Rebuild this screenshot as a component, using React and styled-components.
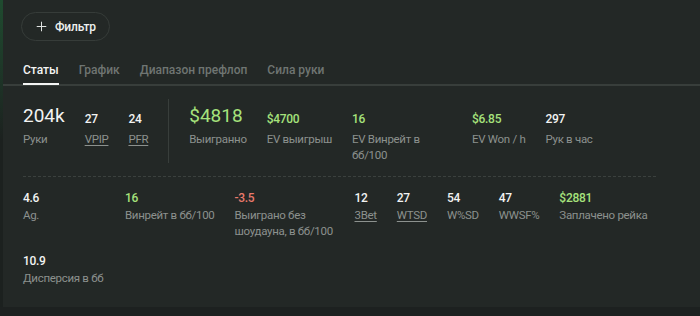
import React from 'react';
import styled, { createGlobalStyle } from 'styled-components';
import { Plus } from 'lucide-react';

const GlobalStyle = createGlobalStyle`
  html, body {
    margin: 0;
    padding: 0;
    background: #1d2120;
  }
  body {
    font-family: Roboto, "Liberation Sans", Arial, sans-serif;
    color: #eef0ef;
  }
`;

const topStats = [
  { value: '204k', label: 'Руки', big: true },
  { value: '27', label: 'VPIP', link: true },
  { value: '24', label: 'PFR', link: true },
  'divider',
  { value: '$4818', label: 'Выигранно', big: true, tone: 'green' },
  { value: '$4700', label: 'EV выигрыш', tone: 'green' },
  { value: '16', label: 'EV Винрейт в бб/100', tone: 'green' },
  { value: '$6.85', label: 'EV Won / h', tone: 'green' },
  { value: '297', label: 'Рук в час' },
];

const moreStats = [
  { value: '4.6', label: 'Ag.', minWidth: 82 },
  { value: '16', label: 'Винрейт в бб/100', tone: 'green' },
  { value: '-3.5', label: 'Выиграно без шоудауна, в бб/100', tone: 'red' },
  { value: '12', label: '3Bet', link: true },
  { value: '27', label: 'WTSD', link: true },
  { value: '54', label: 'W%SD' },
  { value: '47', label: 'WWSF%' },
  { value: '$2881', label: 'Заплачено рейка', tone: 'green' },
  { value: '10.9', label: 'Дисперсия в бб' },
];

const tabs = ['Статы', 'График', 'Диапазон префлоп', 'Сила руки'];

const App = () => {
  return (
    <Page>
      <GlobalStyle />
      <Panel>
        <Toolbar>
          <FilterButton>
            <Plus size={15} strokeWidth={1.6} />
            Фильтр
          </FilterButton>
        </Toolbar>

        <TabBar>
          {tabs.map((t, i) => (
            <Tab key={t} $active={i === 0}>
              {t}
            </Tab>
          ))}
        </TabBar>

        <Stats>
          <TopRow>
            {topStats.map((s, i) =>
              s === 'divider' ? (
                <Divider key={i} />
              ) : (
                <Item key={i}>
                  <TopValue $big={s.big} $tone={s.tone}>
                    {s.value}
                  </TopValue>
                  <Label $link={s.link} $gap={4}>
                    {s.label}
                  </Label>
                </Item>
              )
            )}
          </TopRow>

          <Separator />

          <BottomRow>
            {moreStats.map((s, i) => (
              <Item key={i} $minWidth={s.minWidth}>
                <Value $tone={s.tone}>{s.value}</Value>
                <Label $link={s.link} $gap={1}>
                  {s.label}
                </Label>
              </Item>
            ))}
          </BottomRow>
        </Stats>
      </Panel>
    </Page>
  );
};

export default App;

const tones = {
  green: '#a6e27c',
  red: '#ea7a6c',
  white: '#f2f3f2',
};

const Page = styled.div`
  width: 700px;
  height: 316px;
  background: #1d2120;
`;

const Panel = styled.div`
  height: 307px;
  box-sizing: border-box;
  background: #232826;
  border-left: 3px solid transparent;
  border-image: linear-gradient(#1f4b2f 0, #1e3a29 60px, #1c211f 140px) 1;
  padding-top: 12px;
`;

const Toolbar = styled.div`
  display: flex;
  padding-left: 18px;
`;

const FilterButton = styled.button`
  display: flex;
  align-items: center;
  gap: 6px;
  height: 29px;
  box-sizing: border-box;
  padding: 0 13px 0 12px;
  border: 1px solid #363c39;
  border-radius: 15px;
  background: #232826;
  color: #eef0ef;
  font-family: Roboto, "Liberation Sans", Arial, sans-serif;
  font-size: 12px;
  font-weight: 500;
  letter-spacing: -0.2px;

  svg {
    color: #dfe2e0;
  }
`;

const TabBar = styled.div`
  display: flex;
  gap: 20px;
  margin-top: 21px;
  padding-left: 20px;
  border-bottom: 2px solid #383e3b;
`;

const Tab = styled.div`
  font-size: 12px;
  font-weight: 500;
  line-height: 16px;
  padding-bottom: 5px;
  margin-bottom: -1px;
  color: ${p => (p.$active ? '#f4f5f4' : '#6f7572')};
  border-bottom: 2px solid ${p => (p.$active ? '#f4f5f4' : 'transparent')};
`;

const Stats = styled.div`
  padding: 15px 0 0 20px;
  max-width: 634px;
`;

const TopRow = styled.div`
  display: flex;
  align-items: flex-start;
  gap: 20px;
`;

const BottomRow = styled.div`
  display: flex;
  flex-wrap: wrap;
  align-items: flex-start;
  column-gap: 20px;
  row-gap: 14px;
`;

const Item = styled.div`
  display: flex;
  flex-direction: column;
  max-width: 100px;
  min-width: ${p => (p.$minWidth ? `${p.$minWidth}px` : '0')};
`;

const TopValue = styled.div`
  display: flex;
  align-items: flex-end;
  height: 26px;
  font-size: ${p => (p.$big ? '19px' : '12px')};
  font-weight: ${p => (p.$big ? 400 : 500)};
  line-height: ${p => (p.$big ? '22px' : '16px')};
  letter-spacing: ${p => (p.$big ? '0' : '-0.3px')};
  color: ${p => tones[p.$tone] || tones.white};
  white-space: nowrap;
`;

const Value = styled.div`
  font-size: 12px;
  font-weight: 500;
  line-height: 16px;
  letter-spacing: -0.3px;
  color: ${p => tones[p.$tone] || tones.white};
  white-space: nowrap;
`;

const Label = styled.div`
  margin-top: ${p => p.$gap}px;
  font-size: 11.5px;
  line-height: 16px;
  letter-spacing: -0.3px;
  color: #8c918e;
  text-decoration: ${p => (p.$link ? 'underline' : 'none')};
  text-underline-offset: 2px;
`;

const Divider = styled.div`
  align-self: stretch;
  width: 1px;
  margin-top: -2px;
  background: #383e3b;
`;

const Separator = styled.div`
  height: 1px;
  margin: 13px 0;
  background-image: repeating-linear-gradient(
    90deg,
    #3b413e 0,
    #3b413e 3px,
    transparent 3px,
    transparent 5px
  );
`;
